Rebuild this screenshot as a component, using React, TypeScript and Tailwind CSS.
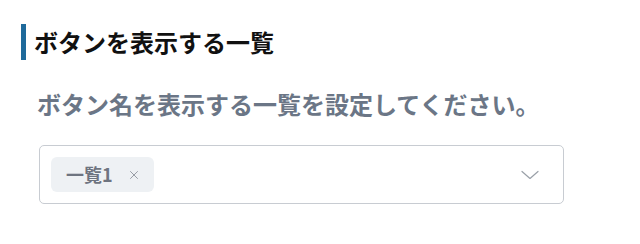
import { X } from "lucide-react";

export default function App() {
  return (
    <div
      className="w-[640px] h-[244px] bg-white pt-6"
      style={{ fontFamily: '"Noto Sans CJK JP", "Noto Sans", sans-serif' }}
    >
      <div className="flex items-center pl-[21px]">
        <div className="w-[5px] h-9 bg-[#1f6a9b]" />
        <h2 className="ml-[8px] text-[24px] leading-9 font-bold text-[#111111]">
          ボタンを表示する一覧
        </h2>
      </div>

      <div className="pl-[37px] pr-[76px] mt-[28px]">
        <p className="text-[24px] leading-8 font-bold text-[#6b7686]">
          ボタン名を表示する一覧を設定してください。
        </p>

        <div className="mt-[25px] ml-[2px] h-[59px] flex items-center justify-between rounded-[5px] border border-[#c8ccd2] pl-[11px] pr-[24px]">
          <div className="flex items-center h-[35px] rounded-[6px] bg-[#eef1f4] pl-[15px] pr-[13px]">
            <span className="text-[18px] font-bold text-[#6e7480]">一覧1</span>
            <X className="ml-[14px] w-[14px] h-[14px] text-[#8a9099]" strokeWidth={1.5} />
          </div>
          <svg width="18" height="10" viewBox="0 0 18 10" fill="none" className="text-[#9aa0a8]">
            <polyline points="1,1.5 9,8.5 17,1.5" stroke="currentColor" strokeWidth="1.2" strokeLinecap="round" strokeLinejoin="round" />
          </svg>
        </div>
      </div>
    </div>
  );
}
